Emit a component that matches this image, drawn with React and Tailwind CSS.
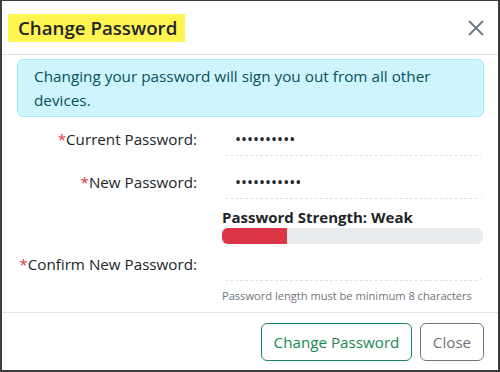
import React from 'react';

function Field({ label, children }) {
  return (
    <>
      <label className="flex items-center justify-end whitespace-nowrap text-[15.2px] text-[#212529]">
        <span className="text-[#dc3545]">*</span>
        {label}
      </label>
      {children}
    </>
  );
}

function PasswordInput({ value }) {
  return (
    <input
      type="password"
      readOnly
      value={value}
      className="h-[34px] w-full rounded-md border-b border-dashed border-[#dee2e6] bg-white pl-[13px] text-[16px] text-[#212529] outline-none"
    />
  );
}

export default function App() {
  return (
    <div className="flex h-[372px] w-[500px] flex-col border-t border-r-2 border-b-2 border-l-2 border-[#3d3d3d] bg-white font-['Segoe_UI','Open_Sans',sans-serif] text-[#212529]">
      <div className="flex h-[54px] shrink-0 items-center justify-between border-b border-[#dee2e6] pr-[14px] pl-[6px]">
        <h5 className="h-[28px] bg-[#fff450] pr-[8px] pl-[10px] text-[18.7px] leading-[28px] font-semibold">
          Change Password
        </h5>
        <button className="text-[#6c757d]" aria-label="Close">
          <svg width="16" height="16" viewBox="0 0 16 16" fill="none" stroke="currentColor" strokeWidth="1.8">
            <path d="M1 1 15 15M15 1 1 15" />
          </svg>
        </button>
      </div>

      <div className="flex-1 pt-[4px] pr-[14px] pl-[15px]">
        <div className="rounded-md border border-[#9eeaf9] bg-[#cff4fc] px-[16px] py-[4px] text-[15.3px] leading-6 text-[#055160]">
          Changing your password will sign you out from all other
          <br />
          devices.
        </div>

        <div className="mt-[5px] grid grid-cols-[180px_261px] gap-x-[25px]">
          <Field label="Current Password:">
            <PasswordInput value="abcdefghij" />
          </Field>
          <div className="col-span-2 h-[9px]" />
          <Field label="New Password:">
            <PasswordInput value="abcdefghijk" />
          </Field>
          <div />
          <div className="pt-[8px]">
            <div className="text-[15px] leading-[20px] font-bold">Password Strength: Weak</div>
            <div className="mt-[1px] h-[16px] overflow-hidden rounded-md bg-[#e9ecef]">
              <div className="h-full bg-[#dc3545]" style={{ width: '25%' }} />
            </div>
          </div>
          <div className="col-span-2 h-[3px]" />
          <Field label="Confirm New Password:">
            <PasswordInput value="" />
          </Field>
          <div />
          <div className="whitespace-nowrap pt-[6px] text-[11.1px] leading-[18px] text-[#6c757d]">
            Password length must be minimum 8 characters
          </div>
        </div>
      </div>

      <div className="flex h-[58px] shrink-0 items-start justify-end gap-[8px] border-t border-[#dee2e6] pt-[10px] pr-[14px]">
        <button className="h-[38px] w-[151px] rounded-md border border-[#198754] text-[15.2px] text-[#198754]">
          Change Password
        </button>
        <button className="h-[38px] w-[64px] rounded-md border border-[#6c757d] text-[15.2px] text-[#6c757d]">
          Close
        </button>
      </div>
    </div>
  );
}
